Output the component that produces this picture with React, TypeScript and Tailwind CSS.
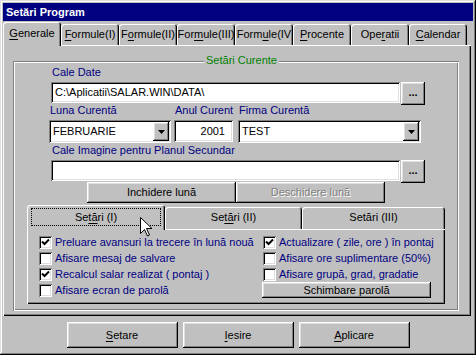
import React from 'react';

// bevel styles, Win9x look
const raised =
  'shadow-[inset_-1px_-1px_#000,inset_1px_1px_#fff,inset_-2px_-2px_#808080,inset_2px_2px_#dfdfdf]';
const sunken =
  'shadow-[inset_1px_1px_#808080,inset_-1px_-1px_#fff,inset_2px_2px_#000,inset_-2px_-2px_#dfdfdf]';
const tabEdge = 'shadow-[inset_1px_1px_#fff,inset_-1px_0_#000,inset_-2px_0_#808080]';

const Key = ({ children }: { children: React.ReactNode }) => (
  <span className="underline underline-offset-[2px]">{children}</span>
);

const Arrow = () => (
  <svg width="7" height="4" viewBox="0 0 7 4">
    <path d="M0 0h7L3.5 4z" fill="#000" />
  </svg>
);

const DotsButton = () => (
  <div className={`flex h-[23px] w-[24px] shrink-0 items-center justify-center bg-[#c0c0c0] pb-[2px] font-bold ${raised}`}>
    ...
  </div>
);

const Combo = ({ value, className }: { value: string; className: string }) => (
  <div className={`flex h-[23px] items-center bg-white p-[2px] ${sunken} ${className}`}>
    <span className="flex-1 pl-[2px]">{value}</span>
    <div className={`flex h-[19px] w-[16px] items-center justify-center bg-[#c0c0c0] ${raised}`}>
      <Arrow />
    </div>
  </div>
);

const Check = ({ checked, label }: { checked?: boolean; label: string }) => (
  <div className="flex h-[16px] items-center">
    <div className={`flex h-[13px] w-[13px] shrink-0 items-center justify-center bg-white ${sunken}`}>
      {checked && (
        <svg width="13" height="13" viewBox="0 0 13 13">
          <path d="M3 5.5l2.5 2.5 4.5-4.5" fill="none" stroke="#000" strokeWidth="2" />
        </svg>
      )}
    </div>
    <span className="ml-[3px] whitespace-nowrap text-[#000080]">{label}</span>
  </div>
);

const mainTabs = [
  { label: <><Key>G</Key>enerale</>, active: true },
  { label: <><Key>F</Key>ormule(I)</> },
  { label: <>F<Key>o</Key>rmule(II)</> },
  { label: <>For<Key>m</Key>ule(III)</> },
  { label: <>Form<Key>u</Key>le(IV</> },
  { label: <><Key>P</Key>rocente</> },
  { label: <>Ope<Key>r</Key>atii</> },
  { label: <><Key>C</Key>alendar</> },
];

export default function App() {
  return (
    <div className="relative h-[355px] w-[476px] select-none bg-[#c0c0c0] p-[3px] font-['Liberation_Sans',Arial,sans-serif] text-[11px] leading-[13px] text-black shadow-[inset_-1px_-1px_#000,inset_1px_1px_#dfdfdf,inset_-2px_-2px_#808080,inset_2px_2px_#fff]">
      <div className="flex h-[18px] items-center bg-[#000080] pl-[3px] font-bold text-white">
        Setări Program
      </div>

      {/* tabs */}
      <div className="mt-px flex h-[23px] items-end">
        {mainTabs.map((t, i) =>
          t.active ? (
            <div
              key={i}
              className={`relative z-10 -mb-px flex h-[24px] w-[58px] shrink-0 justify-center rounded-t-[3px] bg-[#c0c0c0] pt-[5px] ${tabEdge}`}
            >
              {t.label}
            </div>
          ) : (
            <div
              key={i}
              className={`flex h-[21px] w-[58px] shrink-0 justify-center overflow-hidden whitespace-nowrap rounded-t-[3px] pt-[4px] ${tabEdge}`}
            >
              {t.label}
            </div>
          )
        )}
      </div>

      <div className="h-[271px] w-[468px] pl-[10px] pt-[16px] shadow-[inset_1px_1px_#fff,inset_-1px_-1px_#000,inset_-2px_-2px_#808080]">
        <div className="relative h-[250px] w-[446px] pt-[5px] shadow-[inset_1px_1px_#808080,inset_-1px_-1px_#fff,inset_2px_2px_#fff,inset_-2px_-2px_#808080]">
          <span className="absolute left-[191px] top-[-7px] bg-[#c0c0c0] px-[2px] text-[#008000]">
            Setări Curente
          </span>

          <div className="ml-[39px] h-[14px] text-[#000080]">Cale Date</div>
          <div className="ml-[38px] mt-[2px] flex h-[21px] items-start">
            <div className={`flex h-[21px] w-[349px] items-center bg-white pl-[4px] ${sunken}`}>
              {'C:\\Aplicatii\\SALAR.WIN\\DATA\\'}
            </div>
            <div className="ml-px">
              <DotsButton />
            </div>
          </div>

          <div className="flex h-[14px] items-end text-[#000080]">
            <span className="ml-[37px] w-[125px]">Luna Curentă</span>
            <span className="w-[64px]">Anul Curent</span>
            <span>Firma Curentă</span>
          </div>
          <div className="mt-[3px] flex h-[23px] items-start">
            <Combo value="FEBRUARIE" className="ml-[36px] w-[122px]" />
            <div className={`ml-[3px] flex h-[22px] w-[59px] items-center justify-end bg-white pr-[8px] ${sunken}`}>
              2001
            </div>
            <Combo value="TEST" className="ml-[5px] w-[183px]" />
          </div>

          <div className="ml-[39px] flex h-[14px] items-end text-[#000080]">
            Cale Imagine pentru Planul Secundar
          </div>
          <div className="ml-[38px] mt-[3px] flex h-[21px] items-start">
            <div className={`h-[21px] w-[349px] bg-white ${sunken}`} />
            <div className="ml-px">
              <DotsButton />
            </div>
          </div>

          <div className="ml-[74px] mt-px flex h-[21px]">
            <div className={`flex w-[149px] items-center justify-center ${raised}`}>Inchidere lună</div>
            <div className={`flex w-[149px] items-center justify-center text-[#808080] [text-shadow:1px_1px_0_#fff] ${raised}`}>
              Deschidere lună
            </div>
          </div>

          {/* inner tabs */}
          <div className="ml-[14px] mt-[2px] w-[418px]">
            <div className="flex h-[24px] items-end">
              <div className={`relative z-10 -mb-px h-[25px] w-[138px] shrink-0 rounded-t-[3px] bg-[#c0c0c0] pl-[4px] pr-[4px] pt-[3px] ${tabEdge}`}>
                <div className="flex h-[18px] items-center justify-center border border-dotted border-black">
                  Se<Key>tă</Key>ri (I)
                </div>
              </div>
              <div className={`flex h-[22px] w-[137px] shrink-0 justify-center rounded-t-[3px] pt-[4px] ${tabEdge}`}>
                Se<Key>tă</Key>ri (II)
              </div>
              <div className={`flex h-[22px] w-[143px] shrink-0 justify-center rounded-t-[3px] pt-[4px] ${tabEdge}`}>
                Setări (III)
              </div>
            </div>
            <div className="flex h-[75px] pt-[5px] shadow-[inset_1px_1px_#fff,inset_-1px_-1px_#000,inset_-2px_-2px_#808080]">
              <div className="ml-[12px] w-[224px]">
                <Check checked label="Preluare avansuri la trecere în lună nouă" />
                <Check label="Afisare mesaj de salvare" />
                <Check checked label="Recalcul salar realizat ( pontaj )" />
                <Check label="Afisare ecran de parolă" />
              </div>
              <div>
                <Check checked label="Actualizare ( zile, ore ) în pontaj" />
                <Check label="Afisare ore suplimentare (50%)" />
                <Check label="Afisare grupă, grad, gradatie" />
                <div className={`-ml-px flex h-[16px] w-[169px] items-center justify-center ${raised}`}>
                  Schimbare parolă
                </div>
              </div>
            </div>
          </div>
        </div>
      </div>

      <div className="mt-[6px] flex justify-center gap-[5px]">
        <div className={`flex h-[26px] w-[111px] items-center justify-center ${raised}`}>
          <Key>S</Key>etare
        </div>
        <div className={`flex h-[26px] w-[111px] items-center justify-center ${raised}`}>
          <Key>I</Key>esire
        </div>
        <div className={`flex h-[26px] w-[111px] items-center justify-center ${raised}`}>
          <Key>A</Key>plicare
        </div>
      </div>

      {/* mouse pointer */}
      <svg className="absolute left-[140px] top-[217px] z-20" width="13" height="20" viewBox="0 0 13 20">
        <path
          d="M0.5 0.5v16l4-4 3 6.5 2-1-3-6.5h5.5z"
          fill="#fff"
          stroke="#000"
          strokeWidth="1"
          strokeLinejoin="miter"
        />
      </svg>
    </div>
  );
}
